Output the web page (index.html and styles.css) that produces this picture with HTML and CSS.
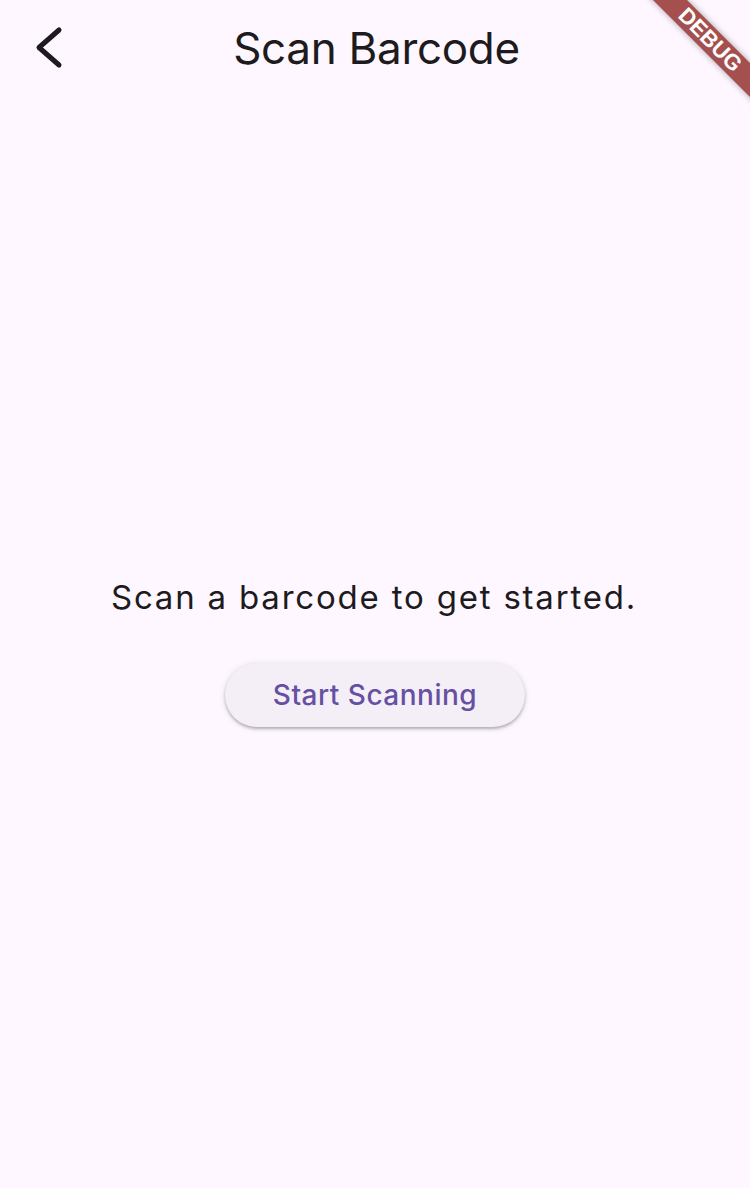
FILE: index.html
```html
<!DOCTYPE html>
<html lang="en">
<head>
<meta charset="utf-8">
<title>Scan Barcode</title>
<link rel="stylesheet" href="styles.css">
</head>
<body>
<div class="app">
  <header class="appbar">
    <div class="toolbar">
      <div class="lead">
        <button class="back" aria-label="Back">
          <svg width="48" height="48" viewBox="0 0 48 48"><path d="M34 6 L14 23.5 L34 41" fill="none" stroke="#1D1B20" stroke-width="5" stroke-linecap="round" stroke-linejoin="round"/></svg>
        </button>
      </div>
      <h1 class="title">Scan Barcode</h1>
      <div class="trail"></div>
    </div>
  </header>
  <main class="content">
    <p class="message">Scan a barcode to get started.</p>
    <button class="scan-btn">Start Scanning</button>
  </main>
  <div class="banner-corner"><div class="banner">DEBUG</div></div>
</div>
</body>
</html>
```
FILE: styles.css
```css
html, body {
  margin: 0;
  padding: 0;
  background: #FEF7FF;
}
.app {
  position: relative;
  width: 750px;
  height: 1188px;
  overflow: hidden;
  display: flex;
  flex-direction: column;
  font-family: Inter, Roboto, "Noto Sans", sans-serif;
  color: #1D1B20;
}
.appbar {
  height: 112px;
  flex: none;
}
.toolbar {
  height: 96px;
  display: grid;
  grid-template-columns: 1fr auto 1fr;
  align-items: center;
}
.lead {
  display: flex;
  align-items: center;
  padding-left: 25px;
}
.back {
  border: 0;
  background: none;
  padding: 0;
  width: 48px;
  height: 48px;
  display: block;
}
.back svg { display: block; }
.title {
  margin: 0;
  font-size: 44px;
  font-weight: 400;
  line-height: 56px;
  padding-left: 3px;
  letter-spacing: -0.3px;
}
.content {
  flex: 1;
  display: flex;
  flex-direction: column;
  align-items: center;
  justify-content: center;
}
.message {
  margin: 0;
  font-size: 33px;
  line-height: 48px;
  letter-spacing: 1.8px;
  padding-right: 2px;
}
.scan-btn {
  margin-top: 42px;
  height: 64px;
  padding: 0 48px;
  border: 0;
  border-radius: 32px;
  background: #F4EFF6;
  color: #6750A4;
  font-family: Inter, Roboto, "Noto Sans", sans-serif;
  font-size: 28px;
  font-weight: 500;
  letter-spacing: 0.5px;
  box-shadow: 0 2px 3px rgba(0,0,0,0.25), 0 1px 6px 1px rgba(0,0,0,0.08);
}
.banner-corner {
  position: absolute;
  top: 0;
  right: 0;
  width: 130px;
  height: 130px;
  overflow: hidden;
}
.banner {
  position: absolute;
  left: -10px;
  top: 28px;
  width: 200px;
  height: 24px;
  transform: rotate(45deg);
  background: #A5504F;
  box-shadow: 0 0 6px rgba(0,0,0,0.35);
  color: #fff;
  font-family: "Liberation Sans", Arial, sans-serif;
  font-weight: 900;
  font-size: 22px;
  line-height: 24px;
  text-align: center;
}
```
